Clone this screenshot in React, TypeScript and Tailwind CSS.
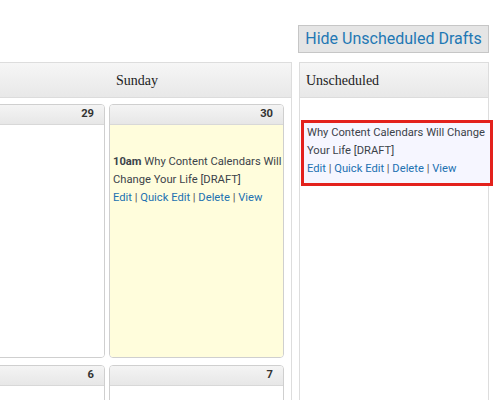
import React from "react";

const bodyFont = { fontFamily: "Roboto, 'Liberation Sans', sans-serif" };

// small day cell of the month grid
function DayCell({
  day,
  highlight = false,
  children,
  className = "",
}: {
  day: number;
  highlight?: boolean;
  children?: React.ReactNode;
  className?: string;
}) {
  return (
    <div
      className={`flex flex-col border border-[#cfcfcf] rounded-[4px] overflow-hidden ${className}`}
    >
      <div
        className="h-[20px] shrink-0 flex items-center justify-end pr-[10px] border-b border-[#d8d8d8] bg-gradient-to-b from-[#f4f4f4] to-[#e7e7e7] font-bold text-[11.2px] text-[#333]"
        style={bodyFont}
      >
        {day}
      </div>
      <div
        className={`flex-1 ${highlight ? "bg-[#fffddc]" : "bg-white"}`}
      >
        {children}
      </div>
    </div>
  );
}

function PostLinks() {
  return (
    <div className="text-[#2271b1]">
      Edit <span className="text-[#555]">|</span> Quick Edit{" "}
      <span className="text-[#555]">|</span> Delete{" "}
      <span className="text-[#555]">|</span> View
    </div>
  );
}

export default function App() {
  return (
    <div className="w-[500px] h-[400px] overflow-hidden bg-white">
      {/* toggle button */}
      <div className="flex justify-end pt-[25px] pr-[11px]">
        <button
          className="w-[191px] h-[28px] bg-[#e5e5e5] border border-[#c6c6c6] text-[#1f78b4] text-[16px] leading-none flex items-center justify-center"
          style={bodyFont}
        >
          Hide Unscheduled Drafts
        </button>
      </div>

      <div className="flex mt-[9px] ml-[-17px] items-start">
        {/* calendar column */}
        <div className="w-[309px] shrink-0 h-[400px] border border-[#dddddd] border-b-0">
          <div
            className="h-[35px] bg-gradient-to-b from-[#f6f6f6] to-[#e8e8e8] border-b border-[#dcdcdc] flex items-center pl-[132px] text-[14px] text-[#222]"
            style={{ fontFamily: "'Liberation Serif', serif" }}
          >
            Sunday
          </div>
          <div className="pt-[6px] pl-[8px] pr-[7px] flex flex-col gap-[7px]">
            <div className="flex gap-[4px] h-[254px]">
              <DayCell day={29} className="flex-1" />
              <DayCell day={30} highlight className="w-[175px] shrink-0">
                <div
                  className="pl-[3px] pt-[28px] text-[11.2px] leading-[18px] text-[#3c434a]"
                  style={bodyFont}
                >
                  <div>
                    <span className="font-bold">10am</span> Why Content
                    Calendars Will Change Your Life [DRAFT]
                  </div>
                  <PostLinks />
                </div>
              </DayCell>
            </div>
            <div className="flex gap-[4px] h-[60px]">
              <DayCell day={6} className="flex-1" />
              <DayCell day={7} className="w-[175px] shrink-0" />
            </div>
          </div>
        </div>

        {/* unscheduled column */}
        <div className="ml-[7px] w-[190px] shrink-0 h-[400px] border border-[#dddddd] border-b-0">
          <div
            className="h-[35px] bg-gradient-to-b from-[#f6f6f6] to-[#e8e8e8] border-b border-[#dcdcdc] flex items-center pl-[6px] text-[14px] text-[#222]"
            style={{ fontFamily: "'Liberation Serif', serif" }}
          >
            Unscheduled
          </div>
          <div className="pt-[22px] pl-[1px]">
            <div
              className="w-[192px] border-[3px] border-[#e3211c] bg-[#f6f6ff] px-[3px] pt-[1px] pb-[5px] text-[11.2px] leading-[18px] text-[#3c434a]"
              style={bodyFont}
            >
              <div>Why Content Calendars Will Change Your Life [DRAFT]</div>
              <PostLinks />
            </div>
          </div>
        </div>
      </div>
    </div>
  );
}
